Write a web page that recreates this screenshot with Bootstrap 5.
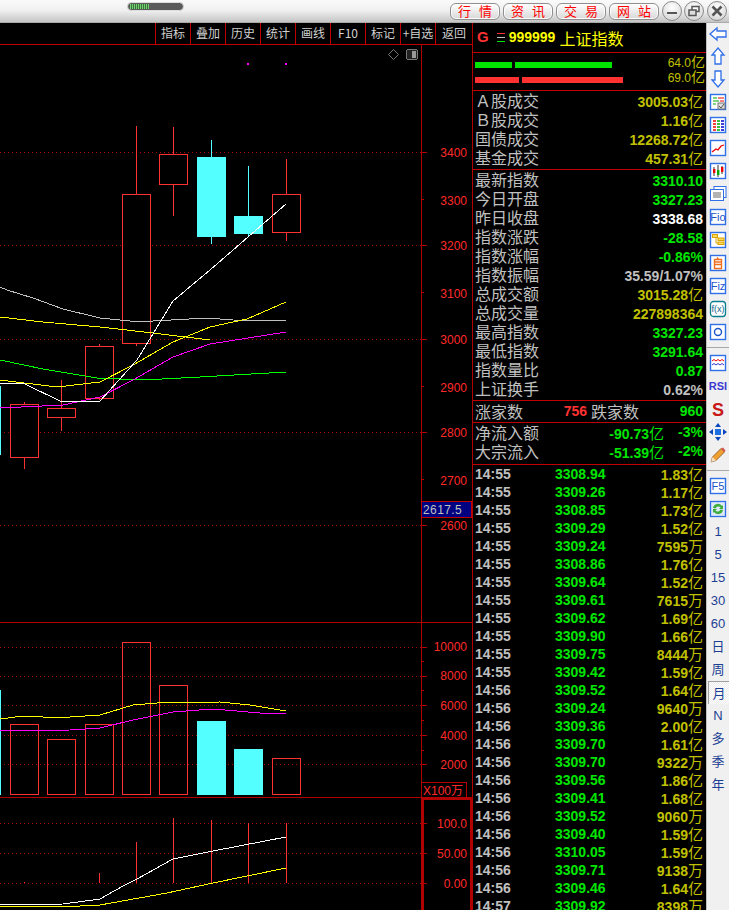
<!DOCTYPE html>
<html lang="zh-CN">
<head>
  <meta charset="UTF-8"/>
  <title>上证指数 K线</title>
  <meta name="viewport" content="width=device-width, initial-scale=1"/>
  <link href="https://cdn.jsdelivr.net/npm/bootstrap@5.3.0/dist/css/bootstrap.min.css" rel="stylesheet"/>
  <style>
    html,body{height:910px;overflow:hidden;background:#000;}
    body{font-family:"Liberation Sans","Noto Sans CJK SC",sans-serif;color:#c0c0c0;}
    .cjk{font-family:"Noto Sans CJK SC","Liberation Sans",sans-serif;}
    .num{font-family:"Liberation Sans","Noto Sans CJK SC",sans-serif;}

    .top-strip{height:23px;background:linear-gradient(#fafafa 0%,#f0f0f0 45%,#c4c4c4 96%,#8a8a8a 100%);}
    .load-pill{width:57px;height:9px;margin:2px 0 0 127px;border-radius:5px;border:1px solid #ddd;background:#5a5a5a;padding:1px 0 1px 2px;}
    .load-pill span{display:block;width:19px;height:100%;background:repeating-linear-gradient(90deg,#6fd26f 0 1px,#3f6f3f 1px 2px);}
    .web-btns{padding-top:3px;}
    .web-btn{width:50px;height:17px;padding:0 7px;margin-right:3px;font-size:13px;line-height:13px;color:#f00;border:1px solid #8f8f8f;border-radius:6px;background:linear-gradient(#fff,#d8d8d8);box-shadow:inset 0 0 0 1px #fff;}
    .web-btn:hover{color:#f00;}
    .win-btns{margin-top:-2px;}
    .round-btn{width:20px;height:20px;margin-right:2px;border-radius:50%;border:1px solid #8a8a8a;background:radial-gradient(circle at 50% 30%,#fff,#cfcfcf);}
    .round-btn:last-child{margin-left:1px;}

    .chart-col{width:473px;border-right:1px solid #b00000;}
    .tab-row{height:22px;border-bottom:1px solid #c00000;background:#000;}
    .tab-cell{width:35px;font-size:12px;line-height:20px;text-align:center;border-left:1px solid #c00000;white-space:nowrap;color:#d0d0d0;}
    .tab-cell:last-child{width:37px;}
    .chart-svg{display:block;}
    .axis{font-size:12px;fill:#ff2a2a;text-anchor:end;}

    .side-col{width:233px;font-size:16px;}
    .head-row{height:30px;border-bottom:1px solid #c00000;padding:0 0 0 4px;}
    .head-row b{font-size:14px;color:#ff0;}
    .head-g{font-size:15px;color:#ff3232;}
    .head-name{font-size:16px;color:#ff0;margin-left:4px;}
    .flow-sec{height:38px;padding-top:4px;border-bottom:1px solid #c00000;}
    .flow-row{height:15px;padding:0 1px 0 2px;font-size:12px;color:#c0c000;}
    .flow-bar{height:6px;margin-right:3px;}
    .flow-g{background:#00e600;}
    .flow-r{background:#ff3232;}
    .flow-val{margin-top:-3px;}
    .flow-val i{font-style:normal;font-size:14px;line-height:14px;}

    .stat-sec{border-bottom:1px solid #c00000;}
    .sec-a{height:79px;}
    .sec-b{height:231px;}
    .sec-c{height:42px;}
    .stat-row{height:19px;padding:0 3px 0 2px;line-height:19px;white-space:nowrap;}
    .stat-tall{height:21px;line-height:21px;}
    .stat-row b,.deal-row b{font-size:14px;}
    .stat-row i,.deal-row i{font-style:normal;font-size:15px;color:#c0c000;}
    .stat-row i.tc-g{color:#00e600;}
    .tc-y{color:#c0c000;}.tc-g{color:#00e600;}.tc-w{color:#fff;}.tc-s{color:#c0c0c0;}.tc-r{color:#ff3232;}
    .w-home{width:48px;}.w-up{width:64px;}.w-pct{width:39px;}
    .deal-row{height:18px;line-height:18px;padding:0 3px 0 2px;white-space:nowrap;}
    .deal-time{width:80px;font-weight:700;font-size:14px;}
    .deal-price{font-weight:700;font-size:14px;color:#00e600;}

    .tool-rail{width:23px;height:887px;background:#f0f0f0;border-left:1px solid #c0c0c0;overflow:hidden;}
    .rail-item{height:23px;color:#1c3f94;font-size:13px;line-height:23px;}
    .rail-item:first-child{height:21px;}
    .rail-sep{height:8px;padding-top:4px;}
    .rail-sep div{height:1px;background:#a8a8a8;}
    .rail-on{background:repeating-conic-gradient(#fff 0 25%,#ececec 0 50%) 0 0/2px 2px;border-top:1px solid #a0a0a0;border-left:1px solid #a0a0a0;margin-left:1px;}
  </style>
</head>
<body>

<div class="top-strip d-flex justify-content-between">
  <div class="load-pill"><span></span></div>
  <div class="d-flex align-items-start web-btns cjk">
    <button class="btn web-btn d-flex justify-content-between" type="button"><span>行</span><span>情</span></button>
    <button class="btn web-btn d-flex justify-content-between" type="button"><span>资</span><span>讯</span></button>
    <button class="btn web-btn d-flex justify-content-between" type="button"><span>交</span><span>易</span></button>
    <button class="btn web-btn d-flex justify-content-between" type="button"><span>网</span><span>站</span></button>
    <div class="d-flex win-btns">
      <div class="round-btn d-flex align-items-center justify-content-center"><svg width="14" height="14"><path d="M2 9h10" stroke="#555" stroke-width="2"/></svg></div>
      <div class="round-btn d-flex align-items-center justify-content-center"><svg width="14" height="14" fill="none" stroke="#555" stroke-width="1.5"><rect x="5" y="2.5" width="7" height="5"/><rect x="2" y="6" width="7" height="5.5" fill="#ddd"/></svg></div>
      <div class="round-btn d-flex align-items-center justify-content-center"><svg width="14" height="14" stroke="#555" stroke-width="2.6"><path d="M2.5 2.500l9 9M11.500 2.500l-9 9"/></svg></div>
    </div>
  </div>
</div>

<div class="d-flex">
  <div class="chart-col">
    <div class="tab-row d-flex justify-content-end cjk">
      <div class="tab-cell">指标</div><div class="tab-cell">叠加</div><div class="tab-cell">历史</div><div class="tab-cell">统计</div><div class="tab-cell">画线</div><div class="tab-cell">F10</div><div class="tab-cell">标记</div><div class="tab-cell">+自选</div><div class="tab-cell">返回</div>
    </div>
    <!-- viewBox keeps page coordinates so the numbers read off the reference directly -->
    <svg class="chart-svg" width="472" height="865" viewBox="0 45 472 865" shape-rendering="crispEdges">
      <g stroke="#a80000" stroke-dasharray="1 3">
        <path d="M0 152.500H421M0 245.500H421M0 339.500H421M0 432.500H421M0 525.500H421"/>
        <path d="M0 647.500H421M0 676.500H421M0 705.500H421M0 735.500H421M0 764.500H421"/>
        <path d="M0 823.500H421M0 853.500H421M0 883.500H421"/>
      </g>
      <g stroke="#b00000">
        <path d="M421.500 45V910"/>
        <path d="M0 622.500H472M0 797.500H472"/>
        <path d="M421 152.500h6M421 245.500h6M421 339.500h6M421 432.500h6M421 525.500h6M421 199.500h3M421 292.500h3M421 386.500h3M421 479.500h3"/>
        <path d="M421 647.500h6M421 676.500h6M421 705.500h6M421 735.500h6M421 764.500h6M421 661.500h3M421 690.500h3M421 720.500h3M421 750.500h3"/>
        <path d="M421 823.500h6M421 853.500h6M421 883.500h6M421 838.500h3M421 868.500h3"/>
      </g>

      <!-- candles -->
      <g fill="#000" stroke="#ff3232">
        <path d="M24.500 402V469M61.500 380V431M99.500 344V400M136.500 126V346M173.500 127V216M286.500 159V241" fill="none"/>
        <rect x="10.500" y="404.500" width="28" height="53"/>
        <rect x="47.500" y="408.500" width="28" height="9"/>
        <rect x="85.500" y="346.500" width="28" height="52"/>
        <rect x="122.500" y="194.500" width="28" height="149"/>
        <rect x="159.500" y="154.500" width="28" height="30"/>
        <rect x="272.500" y="194.500" width="28" height="38"/>
      </g>
      <g fill="#54ffff">
        <rect x="0" y="386" width="1" height="69"/>
        <rect x="211" y="140" width="1" height="104"/>
        <rect x="248" y="166" width="1" height="70"/>
        <rect x="197" y="157" width="29" height="80"/>
        <rect x="234" y="216" width="29" height="18"/>
      </g>

      <!-- moving averages -->
      <g fill="none" stroke-width="1">
        <polyline stroke="#c0c0c0" points="0,287 7,290 33,298 63,309 100,318 130,321 153,321 207,318 233,320 286,321"/>
        <polyline stroke="#ffff00" points="0,317 43,322 100,327 153,333 210,340"/>
        <polyline stroke="#00ff00" points="0,360 43,369 97,378 143,380 200,377 286,372"/>
        <polyline stroke="#ffff00" points="0,380 57,387 100,382 133,365 173,342 210,327 247,319 286,302"/>
        <polyline stroke="#ff00ff" points="0,408 63,405 100,397 133,380 173,357 210,344 286,332"/>
        <polyline stroke="#ffffff" points="0,383 25,384 62,402 100,401 137,360 173,301 210,270 286,204"/>
      </g>
      <g fill="#ff00ff"><rect x="247" y="63" width="2" height="2"/><rect x="285" y="63" width="2" height="2"/></g>
      <path d="M393.500 49.500l5 5-5 5-5-5z" fill="none" stroke="#777" shape-rendering="auto"/>
      <rect x="406.500" y="49.500" width="11" height="10" rx="2" fill="#222" stroke="#777"/>
      <rect x="412" y="51" width="4" height="7" fill="#999"/>

      <!-- price axis -->
      <g>
        <text x="467" y="157" class="axis">3400</text>
        <text x="467" y="205" class="axis">3300</text>
        <text x="467" y="250" class="axis">3200</text>
        <text x="467" y="298" class="axis">3100</text>
        <text x="467" y="344" class="axis">3000</text>
        <text x="467" y="392" class="axis">2900</text>
        <text x="467" y="437" class="axis">2800</text>
        <text x="467" y="485" class="axis">2700</text>
        <text x="467" y="530" class="axis">2600</text>
      </g>
      <rect x="421.500" y="501.500" width="50" height="16" fill="#000080" stroke="#c00000"/>
      <text x="423" y="514" font-size="12" fill="#c0c0c0" letter-spacing=".4">2617.5</text>

      <!-- volume -->
      <g fill="none" stroke="#ff3232">
        <rect x="10.500" y="724.500" width="28" height="70"/>
        <rect x="47.500" y="739.500" width="28" height="55"/>
        <rect x="85.500" y="724.500" width="28" height="70"/>
        <rect x="122.500" y="642.500" width="28" height="152"/>
        <rect x="159.500" y="685.500" width="28" height="109"/>
        <rect x="272.500" y="758.500" width="28" height="36"/>
      </g>
      <g fill="#54ffff">
        <rect x="0" y="690" width="1" height="105"/>
        <rect x="197" y="721" width="29" height="74"/>
        <rect x="234" y="749" width="29" height="46"/>
      </g>
      <g fill="none">
        <polyline stroke="#ffff00" points="0,719 23,716 43,717 70,717 100,715 133,705 157,703 220,702 250,705 286,711"/>
        <polyline stroke="#ff00ff" points="0,731 70,730 100,728 133,720 173,712 213,709 260,713 286,714"/>
      </g>
      <g>
        <text x="467" y="651" class="axis">10000</text>
        <text x="467" y="680" class="axis">8000</text>
        <text x="467" y="710" class="axis">6000</text>
        <text x="467" y="740" class="axis">4000</text>
        <text x="467" y="769" class="axis">2000</text>
      </g>
      <rect x="421.500" y="782.500" width="45" height="15" fill="#000" stroke="#b00000"/>
      <text x="423" y="795" font-size="12" fill="#ff2a2a">X100万</text>

      <!-- oscillator -->
      <path d="M24.500 882V883M99.500 873V883M136.500 842V883M173.500 818V883M211.500 820V883M248.500 823V883M286.500 823V883" stroke="#ff3232"/>
      <g fill="none">
        <polyline stroke="#ffffff" points="0,905 63,904 100,899 123,886 137,879 173,859 213,851 286,837"/>
        <polyline stroke="#ffff00" points="0,906 80,906 100,905 167,893 213,883 286,868"/>
      </g>
      <rect x="423" y="799" width="48" height="120" fill="none" stroke="#b00000" stroke-width="2"/>
      <g>
        <text x="467" y="828" class="axis">100.0</text>
        <text x="467" y="858" class="axis">50.00</text>
        <text x="467" y="888" class="axis">0.00</text>
        <text x="467" y="919" class="axis">-50.00</text>
      </g>
    </svg>
  </div>

  <div class="side-col cjk">
    <div class="head-row d-flex align-items-center">
      <span class="fw-bold num head-g">G</span>
      <svg class="ms-2 me-1" width="8" height="9"><path d="M0 .5h8" stroke="#ff3232"/><path d="M0 4.500h8" stroke="#c0c0c0"/><path d="M0 8.500h8" stroke="#00e600"/></svg>
      <b class="num">999999</b><span class="head-name">上证指数</span>
    </div>
    <div class="flow-sec">
      <div class="flow-row d-flex align-items-center">
        <div class="flow-bar flow-g" style="width:37px"></div><div class="flow-bar flow-g" style="width:97px"></div>
        <span class="ms-auto num flow-val">64.0<i>亿</i></span>
      </div>
      <div class="flow-row d-flex align-items-center">
        <div class="flow-bar flow-r" style="width:44px"></div><div class="flow-bar flow-r" style="width:101px"></div>
        <span class="ms-auto num flow-val">69.0<i>亿</i></span>
      </div>
    </div>
    <div class="stat-sec sec-a" id="sec-a"></div>
    <div class="stat-sec sec-b" id="sec-b"></div>
    <div class="stat-sec">
      <div class="stat-row stat-tall d-flex">
        <span class="w-home">涨家数</span><b class="num tc-r text-end w-up">756</b><span class="ms-1">跌家数</span><b class="num tc-g ms-auto">960</b>
      </div>
    </div>
    <div class="stat-sec sec-c" id="sec-c"></div>
    <div id="deals"></div>
  </div>

  <div class="tool-rail" id="rail"></div>
</div>

<script src="https://cdn.jsdelivr.net/npm/bootstrap@5.3.0/dist/js/bootstrap.bundle.min.js"></script>
<script>
const statRow = ([label, val, cls, unit]) =>
  `<div class="stat-row d-flex justify-content-between"><span>${label}</span><span><b class="num ${cls}">${val}</b>${unit ? `<i>${unit}</i>` : ''}</span></div>`;

document.getElementById('sec-a').innerHTML = [
  ['Ａ股成交', '3005.03', 'tc-y', '亿'],
  ['Ｂ股成交', '1.16', 'tc-y', '亿'],
  ['国债成交', '12268.72', 'tc-y', '亿'],
  ['基金成交', '457.31', 'tc-y', '亿']
].map(statRow).join('');

document.getElementById('sec-b').innerHTML = [
  ['最新指数', '3310.10', 'tc-g'],
  ['今日开盘', '3327.23', 'tc-g'],
  ['昨日收盘', '3338.68', 'tc-w'],
  ['指数涨跌', '-28.58', 'tc-g'],
  ['指数涨幅', '-0.86%', 'tc-g'],
  ['指数振幅', '35.59/1.07%', 'tc-s'],
  ['总成交额', '3015.28', 'tc-y', '亿'],
  ['总成交量', '227898364', 'tc-y'],
  ['最高指数', '3327.23', 'tc-g'],
  ['最低指数', '3291.64', 'tc-g'],
  ['指数量比', '0.87', 'tc-g'],
  ['上证换手', '0.62%', 'tc-s']
].map(statRow).join('');

document.getElementById('sec-c').innerHTML = [
  ['净流入额', '-90.73', '-3%'],
  ['大宗流入', '-51.39', '-2%']
].map(([l, v, p]) =>
  `<div class="stat-row d-flex"><span>${l}</span><span class="ms-auto"><b class="num tc-g">${v}</b><i class="tc-g">亿</i></span><b class="num tc-g text-end w-pct">${p}</b></div>`
).join('');

const deals = `14:55 3308.94 1.83亿|14:55 3309.26 1.17亿|14:55 3308.85 1.73亿|14:55 3309.29 1.52亿|14:55 3309.24 7595万|14:55 3308.86 1.76亿|14:55 3309.64 1.52亿|14:55 3309.61 7615万|14:55 3309.62 1.69亿|14:55 3309.90 1.66亿|14:55 3309.75 8444万|14:55 3309.42 1.59亿|14:56 3309.52 1.64亿|14:56 3309.24 9640万|14:56 3309.36 2.00亿|14:56 3309.70 1.61亿|14:56 3309.70 9322万|14:56 3309.56 1.86亿|14:56 3309.41 1.68亿|14:56 3309.52 9060万|14:56 3309.40 1.59亿|14:56 3310.05 1.59亿|14:56 3309.71 9138万|14:56 3309.46 1.64亿|14:57 3309.92 8398万`;
document.getElementById('deals').innerHTML = deals.split('|').map(d => {
  const [t, p, v] = d.split(' ');
  return `<div class="deal-row d-flex num"><span class="deal-time">${t}</span><span class="deal-price">${p}</span><span class="ms-auto"><b class="tc-y">${v.slice(0, -1)}</b><i class="cjk">${v.slice(-1)}</i></span></div>`;
}).join('');

// right tool rail: each entry is an svg body (20x20) or a plain label
const B = '#2f6fe8';
const frame = (inner, c = B) => `<rect x="2.5" y="2.5" width="15" height="15" fill="#fff" stroke="${c}" stroke-width="1.4"/>${inner}`;
const txt = (s, c = '#1c55c8', size = 9, x = 10, y = 14, w = 400) => `<text x="${x}" y="${y}" text-anchor="middle" font-family="Liberation Sans" font-weight="${w}" font-size="${size}" fill="${c}">${s}</text>`;
const icons = [
  `<path d="M2 10l7-6v3h9v6H9v3z" fill="#fff" stroke="${B}" stroke-width="1.3"/>`,
  `<path d="M10 2l6 7h-3v9H7V9H4z" fill="#fff" stroke="${B}" stroke-width="1.3"/>`,
  `<path d="M10 18l6-7h-3V2H7v9H4z" fill="#fff" stroke="${B}" stroke-width="1.3"/>`,
  frame(`<path d="M5 6h4M5 9h6M5 12h3" stroke="#0a0" stroke-width="1.2"/><path d="M10 6h6M12 9h4" stroke="#e00" stroke-width="1.2"/><rect x="10" y="11" width="7" height="6" fill="#ddd" stroke="#777"/><path d="M11 14l2 2 3-4" fill="none" stroke="#555"/>`),
  frame(`<path d="M5 6h3M5 9h3M5 12h3M5 15h3" stroke="#e00" stroke-width="1.4"/><path d="M9 6h3M9 9h3M9 12h3M9 15h3" stroke="#0a0" stroke-width="1.4"/><path d="M13 6h3M13 9h3M13 12h3M13 15h3" stroke="#00c" stroke-width="1.4"/>`),
  frame(`<path d="M4 14l4-3 2 1 3-4 3-1" fill="none" stroke="#e00" stroke-width="1.3"/>`),
  frame(`<path d="M6 6v9M10 4v12M14 5v8" stroke="#333"/><rect x="5" y="8" width="2.4" height="4" fill="#e00"/><rect x="9" y="9" width="2.4" height="5" fill="#0a0"/><rect x="13" y="6" width="2.4" height="5" fill="#e00"/>`),
  `<rect x="6" y="2.5" width="12" height="11" fill="#fff" stroke="${B}"/><rect x="2.5" y="5.5" width="13" height="11" fill="#fff" stroke="${B}"/><path d="M5 9h8M5 11h8M5 13h8" stroke="#666"/>`,
  frame(txt('Fio', '#1c55c8', 11, 10, 14)),
  frame(`<path d="M5 5h3v8h3" fill="none" stroke="#d9a400"/><rect x="4.5" y="4.5" width="5" height="3" fill="#ffd75a" stroke="#d9a400"/><rect x="10" y="8" width="6" height="2.5" fill="#ffd75a" stroke="#d9a400"/><rect x="10" y="12" width="6" height="2.5" fill="#ffd75a" stroke="#d9a400"/>`),
  frame(`<path d="M6.5 6.500h7v9h-7z" fill="none" stroke="#f07020" stroke-width="1.4"/><path d="M9 4.500l1.500 2M7 9h6M7 11.500h6" stroke="#f07020" stroke-width="1.3"/>`),
  frame(txt('Fiz', '#1c55c8', 11, 10, 14)),
  `<rect x="2.5" y="2.5" width="15" height="15" rx="3" fill="#fff" stroke="#0a7f8f" stroke-width="1.3"/>` + txt('f(x)', '#0a5f8f', 9, 10, 13),
  frame(`<circle cx="10" cy="10" r="3.500" fill="none" stroke="#1c55c8" stroke-width="1.4"/>`),
  'sep',
  frame(`<path d="M4 8l2-1.500 2 1.500 2-1.500 2 1.500 2-1.500 2 1.500" fill="none" stroke="#e00"/><path d="M4 12l2-1.500 2 1.500 2-1.500 2 1.500 2-1.500 2 1.500" fill="none" stroke="#33c"/>`),
  txt('RSI', '#3a3ad0', 11, 10, 14, 700),
  txt('S', '#c81818', 18, 10, 16.5, 700),
  `<path d="M10 1l3 4h-6zM10 19l-3-4h6zM1 10l4-3v6zM19 10l-4 3V7z" fill="#0a45c0"/><rect x="7" y="7" width="6" height="6" fill="#1c6fe0"/>`,
  `<path d="M3 17l1.500-5L13 3.500l3.500 3.500L8 15.500z" fill="#f0a030" stroke="#805020" stroke-width=".8"/><path d="M3 17l1.500-5 3.500 3.500z" fill="#f5dfc0"/><path d="M13 3.500l3.500 3.500 1-1.500L15 2.500z" fill="#d85050"/>`,
  'sep',
  frame(txt('F5', '#1c55c8', 11, 10, 14)),
  `<rect x="2.5" y="2.5" width="15" height="15" fill="#dfe9f8" stroke="${B}" stroke-width="1.3"/><path d="M5 9a5 5 0 0 1 9-2l1-1v4h-4l1.500-1.500a3 3 0 0 0-5 1zM15 11a5 5 0 0 1-9 2l-1 1v-4h4l-1.500 1.500a3 3 0 0 0 5-1z" fill="#3fae3f"/>`,
  '1', '5', '15', '30', '60', '日', '周', '*月', 'N', '多', '季', '年'
];
document.getElementById('rail').innerHTML = icons.map(ic => {
  if (ic === 'sep') return '<div class="rail-sep"><div></div></div>';
  if (ic.length < 4) {
    const on = ic[0] === '*';
    return `<div class="rail-item text-center ${on ? 'rail-on' : ''}">${on ? ic.slice(1) : ic}</div>`;
  }
  return `<div class="rail-item d-flex align-items-center justify-content-center"><svg width="20" height="20" viewBox="0 0 20 20">${ic}</svg></div>`;
}).join('');
</script>
</body>
</html>
